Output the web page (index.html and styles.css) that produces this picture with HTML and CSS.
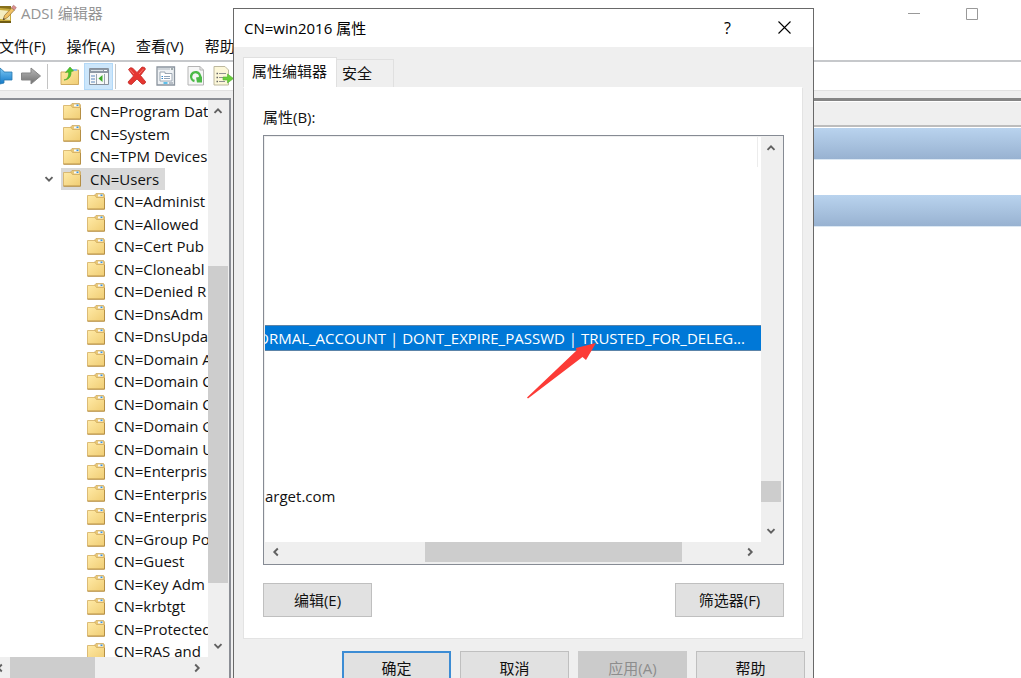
FILE: index.html
```html
<!DOCTYPE html>
<html lang="zh-CN">
<head>
<meta charset="utf-8">
<title>ADSI 编辑器</title>
<link rel="stylesheet" href="styles.css">
</head>
<body>
<svg class="defs" aria-hidden="true">
  <defs>
    <linearGradient id="fold" x1="0" y1="0" x2="1" y2="1"><stop offset="0" stop-color="#ffeaa6"/><stop offset="1" stop-color="#f0cd74"/></linearGradient>
    <linearGradient id="blue" x1="0" y1="0" x2="0" y2="1"><stop offset="0" stop-color="#7cc8f4"/><stop offset="1" stop-color="#1178c8"/></linearGradient>
    <linearGradient id="gray" x1="0" y1="0" x2="0" y2="1"><stop offset="0" stop-color="#b8b8b8"/><stop offset="1" stop-color="#6f6f6f"/></linearGradient>
  </defs>
  <symbol id="folder" viewBox="0 0 18 17"><path d="M8 3V1.500L9 .5H16.500L17.500 2V5H8z" fill="#e8c878" stroke="#c9a35a" stroke-width=".7"/><path d="M11 1.500h5v2h-5z" fill="#f8fbff"/><path d="M13.500 1.500h2v1.500h-2z" fill="#3c94dc"/><path d="M.5 2.500H8L9.500 4.500H17.500V16H.5z" fill="url(#fold)" stroke="#d3ad60" stroke-width=".8"/><path d="M.5 16.200H17.500V5" fill="none" stroke="#b58f45"/></symbol>
  <symbol id="up" viewBox="0 0 10 10"><path d="M1.500 6.800L5 3.300L8.500 6.800" fill="none" stroke="#606060" stroke-width="1.900"/></symbol>
  <symbol id="down" viewBox="0 0 10 10"><path d="M1.500 3.200L5 6.700L8.500 3.200" fill="none" stroke="#606060" stroke-width="1.900"/></symbol>
  <symbol id="left" viewBox="0 0 10 10"><path d="M6.800 1.500L3.300 5L6.800 8.500" fill="none" stroke="#606060" stroke-width="1.900"/></symbol>
  <symbol id="right" viewBox="0 0 10 10"><path d="M3.200 1.500L6.700 5L3.200 8.500" fill="none" stroke="#606060" stroke-width="1.900"/></symbol>
</svg>

<div class="window">
  <header class="titlebar">
    <svg class="app-icon" viewBox="0 0 17 20"><path d="M0 2H11V19H0z" fill="#c9ac3c"/><path d="M0 2H11V5L0 4z" fill="#87701b"/><path d="M0 6L10 7V16L0 15z" fill="#f4edc0"/><path d="M0 17H11V19H0z" fill="#6f5b13"/><path d="M3 16L4.500 11.500L11.500 4L14.500 6L7.500 13.500z" fill="#f2c264" stroke="#8a6a30" stroke-width=".7"/><path d="M11.500 3.500L13.500 1.200L16.300 3.500L14.500 6z" fill="#dc9090" stroke="#a86c6c" stroke-width=".6"/><path d="M3 16L3.800 14L5 15.200z" fill="#333"/></svg>
    <h1 class="app-title">ADSI 编辑器</h1>
    <div class="window-buttons">
      <button class="caption-button" aria-label="最小化"><svg width="12" height="12" viewBox="0 0 12 12"><path d="M0 5.500H12" stroke="#999"/></svg></button>
      <button class="caption-button" aria-label="最大化"><svg width="12" height="12" viewBox="0 0 12 12"><path d="M.5.5H11.500V11.500H.5z" fill="none" stroke="#999"/></svg></button>
    </div>
  </header>
  <nav class="menubar">
    <button class="menu">文件(F)</button>
    <button class="menu">操作(A)</button>
    <button class="menu">查看(V)</button>
    <button class="menu">帮助</button>
  </nav>
  <div class="toolbar">
    <button class="tool tool-back" aria-label="后退"><svg width="13" height="20" viewBox="0 0 13 20"><path d="M0 2L4 5.500V6H12V14H4V17L0 18z" fill="url(#blue)" stroke="#2878b0" stroke-width=".8"/></svg></button>
    <button class="tool tool-forward" aria-label="前进"><svg width="22" height="20" viewBox="0 0 22 20"><path d="M1.500 7H11V2L20.500 10L11 18V14H1.500z" fill="url(#gray)" stroke="#858585"/></svg></button>
    <span class="separator"></span>
    <button class="tool tool-up" aria-label="向上"><svg width="20" height="20" viewBox="0 0 20 20"><path d="M1 6H7L9 4H18.500V18.500H1z" fill="url(#fold)" stroke="#d0ab60"/><path d="M12 3h5v2h-5z" fill="#8dbde5"/><path d="M4 14C8 13 9 10 8.500 6L5.500 6.500L10 1L13.500 5L11 5.500C11.500 10 9 14 4 14z" fill="#50c62b" stroke="#3fa526" stroke-width=".6"/></svg></button>
    <button class="tool tool-active" aria-label="显示/隐藏控制台树"><svg width="20" height="17" viewBox="0 0 20 17"><path d="M.5.5H19.500V16.500H.5z" fill="#f7f8f9" stroke="#87909b"/><path d="M1 1H19V5H1z" fill="#8e98a4"/><path d="M2 2.500H14" stroke="#dce3e9"/><path d="M15 2.500h3" stroke="#fff"/><path d="M7.500 6V16M15.500 6V16" stroke="#9ba4af"/><path d="M2 8h4M2 11h4M2 14h4" stroke="#5a86bd"/><path d="M13.500 7V14L9.500 10.500z" fill="#3dab28"/></svg></button>
    <span class="separator"></span>
    <button class="tool tool-delete" aria-label="删除"><svg width="20" height="20" viewBox="0 0 20 20"><path d="M1.500 3.500Q3 .8 5.500 2L10 6.500L15 1Q18 .8 18.500 3L13.500 9.500L18.800 16Q17.500 19 15 18L10 13L4.500 18.500Q1.500 18.500 1 16L6.500 10z" fill="#e53630" stroke="#c22c29" stroke-width=".8"/><path d="M3 3.500L7 8M16.500 3L12 8" stroke="#f47a72"/></svg></button>
    <button class="tool tool-properties" aria-label="属性"><svg width="20" height="20" viewBox="0 0 20 20"><path d="M1 1H18.500V19H1z" fill="#eef1f4" stroke="#8b949e" stroke-width="1.300"/><path d="M2 3H14" stroke="#b0b8c0"/><path d="M15 3h2" stroke="#566"/><path d="M4 6H9V7.500H16V15H4z" fill="#fff" stroke="#9ca7b3"/><path d="M8 10.500h6M8 12.500h6" stroke="#8ea3ba"/><path d="M5.500 10.500h1.500M5.500 12.500h1.500" stroke="#3386c9"/><path d="M7.500 17h4" stroke="#39b3e8" stroke-width="1.600"/><path d="M13 17h4" stroke="#a9b2bb" stroke-width="1.600"/></svg></button>
    <button class="tool tool-refresh" aria-label="刷新"><svg width="18" height="20" viewBox="0 0 18 20"><path d="M1 .5H13L16.500 4V19H1z" fill="#f6f6f6" stroke="#b4b4b4"/><path d="M13 .5V4H16.500" fill="none" stroke="#b4b4b4"/><path d="M7.500 15A4.500 4.500 0 1 1 13 11.500" fill="none" stroke="#4cba48" stroke-width="2.400"/><path d="M9 11.500L15 10.500V16.500H10z" fill="#4cba48"/></svg></button>
    <button class="tool tool-export" aria-label="导出列表"><svg width="21" height="20" viewBox="0 0 21 20"><path d="M1 .5H12L15.500 4V19H1z" fill="#fcf7d9" stroke="#bdb89e"/><path d="M6 7.500h7M6 11.500h6M6 15.500h6" stroke="#909090"/><path d="M3.500 7.500h1.500M3.500 11.500h1.500M3.500 15.500h1.500" stroke="#666" stroke-width="1.500"/><path d="M10 11H14.500V8L20.500 12.500L14.500 17V14H10z" fill="#68cf3a" stroke="#52b434" stroke-width=".6"/></svg></button>
  </div>

  <main class="workspace">
    <section class="tree-pane">
      <div class="tree-view">
        <ul class="tree">
          <li class="node"><svg class="folder"><use href="#folder"/></svg><span class="name">CN=Program Dat</span></li>
          <li class="node"><svg class="folder"><use href="#folder"/></svg><span class="name">CN=System</span></li>
          <li class="node"><svg class="folder"><use href="#folder"/></svg><span class="name">CN=TPM Devices</span></li>
          <li class="node node-open"><svg class="twisty"><use href="#down"/></svg><span class="selected"><svg class="folder"><use href="#folder"/></svg><span class="name">CN=Users</span></span></li>
          <li class="node child"><svg class="folder"><use href="#folder"/></svg><span class="name">CN=Administ</span></li>
          <li class="node child"><svg class="folder"><use href="#folder"/></svg><span class="name">CN=Allowed</span></li>
          <li class="node child"><svg class="folder"><use href="#folder"/></svg><span class="name">CN=Cert Pub</span></li>
          <li class="node child"><svg class="folder"><use href="#folder"/></svg><span class="name">CN=Cloneabl</span></li>
          <li class="node child"><svg class="folder"><use href="#folder"/></svg><span class="name">CN=Denied R</span></li>
          <li class="node child"><svg class="folder"><use href="#folder"/></svg><span class="name">CN=DnsAdm</span></li>
          <li class="node child"><svg class="folder"><use href="#folder"/></svg><span class="name">CN=DnsUpda</span></li>
          <li class="node child"><svg class="folder"><use href="#folder"/></svg><span class="name">CN=Domain A</span></li>
          <li class="node child"><svg class="folder"><use href="#folder"/></svg><span class="name">CN=Domain C</span></li>
          <li class="node child"><svg class="folder"><use href="#folder"/></svg><span class="name">CN=Domain C</span></li>
          <li class="node child"><svg class="folder"><use href="#folder"/></svg><span class="name">CN=Domain G</span></li>
          <li class="node child"><svg class="folder"><use href="#folder"/></svg><span class="name">CN=Domain U</span></li>
          <li class="node child"><svg class="folder"><use href="#folder"/></svg><span class="name">CN=Enterpris</span></li>
          <li class="node child"><svg class="folder"><use href="#folder"/></svg><span class="name">CN=Enterpris</span></li>
          <li class="node child"><svg class="folder"><use href="#folder"/></svg><span class="name">CN=Enterpris</span></li>
          <li class="node child"><svg class="folder"><use href="#folder"/></svg><span class="name">CN=Group Po</span></li>
          <li class="node child"><svg class="folder"><use href="#folder"/></svg><span class="name">CN=Guest</span></li>
          <li class="node child"><svg class="folder"><use href="#folder"/></svg><span class="name">CN=Key Adm</span></li>
          <li class="node child"><svg class="folder"><use href="#folder"/></svg><span class="name">CN=krbtgt</span></li>
          <li class="node child"><svg class="folder"><use href="#folder"/></svg><span class="name">CN=Protected</span></li>
          <li class="node child"><svg class="folder"><use href="#folder"/></svg><span class="name">CN=RAS and</span></li>
        </ul>
        <div class="vscroll tree-vscroll"><svg class="chev"><use href="#up"/></svg><div class="track"><i class="thumb"></i></div><svg class="chev"><use href="#down"/></svg></div>
        <div class="hscroll tree-hscroll"><svg class="chev chev-cut"><use href="#left"/></svg><div class="track"><i class="thumb"></i></div><svg class="chev"><use href="#right"/></svg></div>
      </div>
    </section>
    <section class="detail-pane">
      <div class="column-header"></div>
      <div class="action-band"></div>
      <div class="action-gap"></div>
      <div class="action-band"></div>
    </section>
  </main>
</div>

<div class="dialog" role="dialog" aria-labelledby="dialog-title">
  <header class="dialog-titlebar">
    <h2 class="dialog-title" id="dialog-title">CN=win2016 属性</h2>
    <button class="dialog-caption">?</button>
    <button class="dialog-caption" aria-label="关闭"><svg width="13" height="13" viewBox="0 0 13 13"><path d="M.5.5L12.500 12.500M12.500.5L.5 12.500" stroke="#000" stroke-width="1.100"/></svg></button>
  </header>
  <div class="dialog-body">
    <div class="tabs" role="tablist">
      <button class="tab tab-active" role="tab">属性编辑器</button>
      <button class="tab" role="tab">安全</button>
    </div>
    <div class="tab-panel">
      <div class="label" id="attr-label">属性(B):</div>
      <div class="list" aria-labelledby="attr-label">
        <div class="rows">
          <div class="list-head"></div>
          <div class="spacer"></div>
          <div class="row row-selected"><span>ORMAL_ACCOUNT | DONT_EXPIRE_PASSWD | TRUSTED_FOR_DELEG...</span></div>
          <div class="spacer"></div>
          <div class="row"><span>arget.com</span></div>
        </div>
        <div class="vscroll list-vscroll"><svg class="chev"><use href="#up"/></svg><div class="track"><i class="thumb"></i></div><svg class="chev"><use href="#down"/></svg></div>
        <div class="hscroll list-hscroll"><svg class="chev"><use href="#left"/></svg><div class="track"><i class="thumb"></i></div><svg class="chev"><use href="#right"/></svg></div>
        <svg class="pointer" viewBox="0 0 70 56"><path d="M1 54.500L50.500 7.500L50 5L70 0L60 17L56.500 14L2 55.500z" fill="#fc3b36"/></svg>
      </div>
      <div class="panel-buttons">
        <button class="button">编辑(E)</button>
        <button class="button">筛选器(F)</button>
      </div>
    </div>
    <div class="dialog-buttons">
      <button class="button button-default">确定</button>
      <button class="button">取消</button>
      <button class="button" disabled>应用(A)</button>
      <button class="button">帮助</button>
    </div>
  </div>
</div>
</body>
</html>
```

FILE: styles.css
```css
* { box-sizing: border-box; }
body {
  margin: 0;
  height: 100vh;
  overflow: hidden;
  background: #fff;
  color: #111;
  font-family: "Open Sans", "Noto Sans CJK SC", sans-serif;
  font-size: 15px;
}
button {
  margin: 0;
  padding: 0;
  border: 0;
  background: none;
  color: inherit;
  font: inherit;
  white-space: nowrap;
}
svg { display: block; flex: none; }
.defs { position: absolute; width: 0; height: 0; }

.window { display: flex; flex-direction: column; height: 100vh; }
.titlebar { display: flex; align-items: center; height: 28px; flex: none; }
.app-icon { width: 17px; height: 20px; }
.app-title { margin: 0 auto 0 4px; padding-bottom: 2px; color: #949494; font-size: 15px; font-weight: 400; line-height: 24px; }
.window-buttons { display: flex; padding-right: 20px; }
.caption-button { display: grid; place-items: center; width: 58px; height: 28px; }
.menubar { display: flex; gap: 21px; height: 34px; flex: none; align-items: center; padding-top: 2px; border-bottom: 2px solid #c6c8cb; }
.menu:first-child { margin-left: -1px; }
.toolbar { display: flex; align-items: center; height: 29px; flex: none; border-bottom: 1px solid #e1e1e1; }
.tool { display: grid; place-items: center; height: 27px; }
.tool-back { width: 13px; }
.tool-forward { width: 22px; margin: 0 5px 0 7px; }
.separator { width: 1px; height: 25px; background: #c4c4c4; }
.tool-up { width: 20px; margin: 0 4px 0 12px; }
.tool-active { width: 29px; margin-right: 2px; background: #cce6fb; border: 1px solid #b2d8f7; }
.tool-delete { width: 20px; margin: 0 9px 0 11px; }
.tool-properties { width: 20px; margin-right: 11px; }
.tool-refresh { width: 18px; margin-right: 8px; }
.tool-export { width: 21px; }

.workspace { display: flex; flex: 1; min-height: 0; background: #efefef; padding-top: 7px; }
.tree-pane { width: 231px; flex: none; border-top: 2px solid #8b8e95; border-right: 2px solid #8b8e95; padding-right: 1px; }
.tree-view { display: grid; height: 100%; grid-template: minmax(0, 1fr) 21px / minmax(0, 1fr) 20px; background: #efefef; }
.tree { margin: 0; padding: 0; list-style: none; overflow: hidden; background: #fff; }
.node { display: flex; align-items: center; height: 22px; padding-left: 63px; font-size: 15px; white-space: nowrap; }
.node:nth-child(even) { height: 23px; }
.child { padding-left: 87px; }
.folder { width: 18px; height: 17px; margin-right: 9px; }
.name { line-height: 22px; }
.node-open { padding-left: 44px; }
.twisty { width: 10px; height: 10px; margin-right: 7px; }
.selected { display: flex; align-items: center; background: #d9d9d9; padding: 0 6px 0 2px; }
.vscroll, .hscroll { display: flex; align-items: center; background: #efefef; }
.vscroll { flex-direction: column; }
.track { display: flex; flex: 1; align-self: stretch; }
.vscroll .track { flex-direction: column; }
.thumb { background: #cdcdcd; }
.chev { width: 10px; height: 10px; margin: 6px; }
.tree-vscroll .track { padding-top: 144px; }
.tree-vscroll .thumb { height: 317px; }
.tree-hscroll .chev-cut { margin: 0 5px 0 -5px; }
.tree-hscroll .thumb { width: 85px; }

.detail-pane { flex: 1; margin-left: 2px; border-top: 3px solid #858585; background: #fff; }
.column-header { height: 26px; margin-bottom: 1px; background: #efefef; border-top: 1px solid #fff; border-bottom: 2px solid #bcbcbc; }
.action-band { height: 32px; background: linear-gradient(#b9d3ee, #98b2d1); border-bottom: 1px solid #dce8f3; }
.action-gap { height: 35px; }

.dialog { position: absolute; top: 8px; left: 233px; right: 207px; border: 1px solid #696969; background: #efefef; }
.dialog-titlebar { display: flex; align-items: center; height: 38px; padding-left: 10px; background: #fff; }
.dialog-title { margin: 0 auto 0 0; padding-bottom: 2px; font-size: 15px; font-weight: 400; color: #000; }
.dialog-caption { display: grid; place-items: center; width: 57px; height: 38px; padding-bottom: 1px; font-size: 16px; color: #000; }
.dialog-body { padding: 10px 10px 10px 9px; }
.tabs { display: flex; align-items: flex-end; }
.tab { height: 28px; width: 57px; padding: 0 15px 2px 5px; border: 1px solid #e0e0e0; border-width: 1px 1px 0 0; text-align: left; }
.tab-active { width: 94px; height: 30px; padding: 0 8px 4px; border-width: 1px 1px 0 1px; background: #fff; }
.tab-panel { padding: 17px 18px 21px 19px; border: 1px solid #e3e3e3; border-top-color: #fff; background: #fff; }
.label { height: 30px; line-height: 24px; }
.list { position: relative; display: grid; grid-template: 405px 20px / minmax(0, 1fr) 20px; border: 1px solid #868b94; padding: 1px 2px 2px 1px; background: #efefef; }
.rows { overflow: hidden; background: #fff; }
.list-head { width: 493px; height: 30px; border-right: 1px solid #ececec; }
.spacer { height: 158px; }
.row-selected + .spacer { height: 132px; }
.row { display: flex; height: 26px; align-items: center; white-space: nowrap; }
.row-selected { justify-content: flex-end; padding-right: 16px; background: #0078d7; color: #fff; border: 1px solid #5c84a8; border-width: 1px 0; }
.list-vscroll .track { padding-top: 322px; }
.list-vscroll .thumb { height: 21px; }
.list-hscroll .track { padding-left: 138px; }
.list-hscroll .thumb { width: 257px; }
.pointer { position: absolute; left: 262px; top: 207px; width: 70px; height: 56px; }
.panel-buttons { display: flex; justify-content: space-between; margin-top: 18px; }
.button { width: 109px; height: 34px; padding-bottom: 2px; border: 1px solid #bfbfbf; background: #e1e1e1; text-align: center; }
.button-default { border: 2px solid #3c8cd4; }
.button:disabled { border-color: #cbcbcb; background: #cbcbcb; color: #8d8d8d; }
.dialog-buttons { display: flex; justify-content: flex-end; gap: 9px; margin-top: 12px; margin-right: -2px; }
```
